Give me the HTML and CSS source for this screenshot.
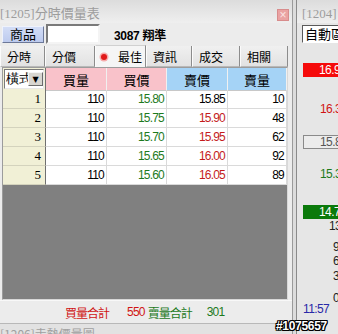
FILE: index.html
```html
<!DOCTYPE html>
<html lang="zh-Hant">

<head>
    <meta charset="UTF-8">
    <title>分時價量表</title>
    <link rel="stylesheet" href="styles.css">
</head>

<body>
    <div class="screen">
        <!-- 1205 window -->
        <div class="main">
            <div class="titlebar">
                <span class="title">[1205]分時價量表</span>
                <span class="close">×</span>
            </div>

            <div class="toolbar">
                <button class="btn">商品</button>
                <div class="input"></div>
                <b class="stock">3087 翔準</b>
            </div>

            <div class="tabs">
                <div class="tab w45">分時</div>
                <div class="tab w50">分價</div>
                <div class="tab w51 active"><span class="dot"></span>最佳</div>
                <div class="tab w46">資訊</div>
                <div class="tab w48">成交</div>
                <div class="tab w48">相關</div>
            </div>

            <div class="grid">
                <div class="row head">
                    <div class="cell idx">
                        <div class="select"><span class="select-text">橫式</span><span class="arrow">▼</span></div>
                    </div>
                    <div class="cell buy">買量</div>
                    <div class="cell buy">買價</div>
                    <div class="cell sell">賣價</div>
                    <div class="cell sell">賣量</div>
                </div>
                <div class="row">
                    <div class="cell idx">1</div>
                    <div class="cell">110</div>
                    <div class="cell up">15.80</div>
                    <div class="cell">15.85</div>
                    <div class="cell">10</div>
                </div>
                <div class="row">
                    <div class="cell idx">2</div>
                    <div class="cell">110</div>
                    <div class="cell up">15.75</div>
                    <div class="cell down">15.90</div>
                    <div class="cell">48</div>
                </div>
                <div class="row">
                    <div class="cell idx">3</div>
                    <div class="cell">110</div>
                    <div class="cell up">15.70</div>
                    <div class="cell down">15.95</div>
                    <div class="cell">62</div>
                </div>
                <div class="row">
                    <div class="cell idx">4</div>
                    <div class="cell">110</div>
                    <div class="cell up">15.65</div>
                    <div class="cell down">16.00</div>
                    <div class="cell">92</div>
                </div>
                <div class="row">
                    <div class="cell idx">5</div>
                    <div class="cell">110</div>
                    <div class="cell up">15.60</div>
                    <div class="cell down">16.05</div>
                    <div class="cell">89</div>
                </div>
            </div>

            <div class="sumbar">
                <span class="red">買量合計</span>
                <span class="red num">550</span>
                <span class="green">賣量合計</span>
                <span class="green num">301</span>
            </div>

            <div class="nexttitle">[1206]走勢價量圖</div>
        </div>

        <div class="splitter"></div>

        <!-- 1204 window (cut off) -->
        <div class="side">
            <div class="titlebar">
                <span class="title">[1204]</span>
            </div>
            <div class="side-bar">
                <div class="combo">自動區間</div>
            </div>
            <div class="chart">
                <div class="mark mark-red" style="top: 18px">16.90</div>
                <div class="label red" style="top: 57px">16.30</div>
                <div class="mark mark-ref" style="top: 90px">15.80</div>
                <div class="label green" style="top: 122px">15.30</div>
                <div class="mark mark-green" style="top: 160px">14.70</div>
                <div class="label vol" style="top: 174px; left: 32px">1308</div>
                <div class="label vol" style="top: 195px">981</div>
                <div class="label vol" style="top: 209px">654</div>
                <div class="label vol" style="top: 224px">327</div>
                <div class="label vol" style="top: 246px">0</div>
                <div class="label time" style="top: 257px">11:57</div>
            </div>
        </div>

        <div class="watermark">#1075657</div>
    </div>
</body>

</html>
```

FILE: styles.css
```css
* {
    box-sizing: border-box;
}

body {
    margin: 0;
    width: 338px;
    height: 334px;
    overflow: hidden;
    background-color: #e8e8e8;
    font-family: "Liberation Sans", "Noto Sans CJK TC", sans-serif;
    font-size: 13px;
    color: #000;
}

.screen {
    position: relative;
    display: flex;
    height: 334px;
}

/* Left window */
.main {
    flex: none;
    width: 292px;
    display: flex;
    flex-direction: column;
    background-color: #ececec;
}

.titlebar {
    flex: none;
    height: 23px;
    display: flex;
    align-items: flex-end;
    padding-bottom: 2px;
    background: linear-gradient(#dcdcdc, #efefef);
}

.title {
    color: #9d9d9d;
    font-family: "Liberation Serif", "Noto Sans CJK TC", serif;
    font-size: 13px;
    line-height: 15px;
    white-space: nowrap;
}

.close {
    margin-left: auto;
    margin-right: 3px;
    width: 12px;
    height: 12px;
    display: flex;
    align-items: center;
    justify-content: center;
    background-color: #eaa2a2;
    border: 1px solid #d88c8c;
    color: #fbe3e3;
    font-size: 12px;
    line-height: 10px;
}

/* Toolbar */
.toolbar {
    flex: none;
    height: 22px;
    display: flex;
    align-items: center;
    padding-left: 2px;
}

.btn {
    width: 42px;
    height: 17px;
    padding: 0;
    border: 1px solid;
    border-color: #eef2fc #6c7898 #6c7898 #eef2fc;
    background: linear-gradient(#d3ddf6, #bccaee);
    font-family: "Noto Sans CJK TC", sans-serif;
    font-size: 13px;
    line-height: 14px;
}

.input {
    margin-left: 2px;
    width: 54px;
    height: 20px;
    background-color: #fff;
    border: 2px solid;
    border-color: #7a7a7a #f4f4f4 #f4f4f4 #7a7a7a;
}

.stock {
    margin-left: 14px;
    font-size: 12px;
    letter-spacing: -0.3px;
}

/* Tabs */
.tabs {
    flex: none;
    height: 22px;
    display: flex;
    align-items: flex-end;
}

.tab {
    height: 21px;
    display: flex;
    align-items: center;
    padding-left: 6px;
    border-left: 1px solid #fbfbfb;
    border-right: 1px solid #8c8c8c;
    border-bottom: 1px solid #b8b8b8;
    background: linear-gradient(#f0f0f0, #e2e2e2);
    font-family: "Noto Sans CJK TC", sans-serif;
    font-size: 12px;
}

.tab.active {
    height: 22px;
    border-top: 1px solid #d0d0d0;
    border-bottom: none;
    background: #f5f5f5;
    padding-left: 4px;
}

.w45 { width: 45px; }
.w46 { width: 46px; }
.w48 { width: 48px; }
.w50 { width: 50px; }
.w51 { width: 51px; }

.dot {
    width: 6px;
    height: 6px;
    margin: 0 11px 0 1px;
    border-radius: 50%;
    background-color: #e01818;
    box-shadow: 0 0 0 1.5px #f6aaaa;
}

/* Quote grid */
.grid {
    flex: none;
    height: 233px;
    margin: 0 4px 0 2px;
    background-color: #808080;
    border: 1px solid;
    border-color: #9c9c9c #d8d8d8 #d8d8d8 #9c9c9c;
}

.row {
    display: grid;
    grid-template-columns: 43px 61px 60px 61px 59px;
    height: 19px;
    background-color: #fff;
}

.row.head {
    height: 22px;
}

.cell {
    display: flex;
    align-items: center;
    justify-content: flex-end;
    padding-right: 2px;
    border-right: 1px solid #dadada;
    border-bottom: 1px solid #dadada;
    font-size: 12px;
    letter-spacing: -0.8px;
    white-space: nowrap;
}

.head .cell {
    justify-content: center;
    padding-right: 0;
    border-right-color: #f0f0f0;
    border-bottom-color: #c8c8c8;
    font-family: "Noto Sans CJK TC", sans-serif;
    font-size: 13px;
    letter-spacing: 0;
}

.cell.idx {
    padding-right: 4px;
    background-color: #f1f0d6;
    border-right: 1px solid #707070;
    border-bottom-color: #d4d3bd;
    font-family: "Liberation Serif", serif;
    font-size: 13px;
    letter-spacing: 0;
}

.head .cell.idx {
    padding: 1px;
    background-color: #f1f0d6;
    border-right: 1px solid #707070;
}

.head .buy {
    background-color: #f9c2ca;
}

.head .sell {
    background-color: #a5d3f6;
}

.select {
    width: 100%;
    height: 100%;
    display: flex;
    align-items: center;
    background-color: #fff;
    border: 1px solid;
    border-color: #7a7a7a #e8e8e8 #e8e8e8 #7a7a7a;
    overflow: hidden;
}

.select-text {
    width: 23px;
    padding-left: 1px;
    overflow: hidden;
    font-size: 13px;
    white-space: nowrap;
}

.arrow {
    width: 15px;
    height: 14px;
    display: flex;
    align-items: center;
    justify-content: center;
    background-color: #d8d6d0;
    border: 1px solid;
    border-color: #f4f4f4 #6c6c6c #6c6c6c #f4f4f4;
    font-family: "DejaVu Sans", sans-serif;
    font-size: 8px;
}

.up {
    color: #1d7a1d;
}

.down {
    color: #c41c1c;
}

/* Totals */
.sumbar {
    flex: none;
    height: 23px;
    display: flex;
    align-items: center;
    padding-left: 65px;
    border-top: 1px solid #f8f8f8;
    font-family: "Noto Sans CJK TC", sans-serif;
    font-size: 12px;
    letter-spacing: -1px;
}

.sumbar .num {
    font-family: "Liberation Sans", sans-serif;
    font-size: 12px;
    letter-spacing: -0.8px;
    margin: 0 3px 0 18px;
}

.sumbar .num:last-child {
    margin-left: 15px;
}

.red {
    color: #d01414;
}

.green {
    color: #1c7a1c;
}

.nexttitle {
    flex: none;
    height: 11px;
    overflow: hidden;
    padding: 3px 0 0 0;
    border-top: 1px solid #b8b8b8;
    background-color: #e2e2e2;
    color: #a0a0a0;
    font-family: "Noto Sans CJK TC", sans-serif;
    font-size: 12px;
    line-height: 14px;
    white-space: nowrap;
}

/* Splitter between windows */
.splitter {
    flex: none;
    width: 5px;
    background-color: #dcdcdc;
    border-left: 1px solid #9a9a9a;
    border-right: 1px solid #8a8a8a;
}

/* Right window */
.side {
    flex: none;
    width: 41px;
    display: flex;
    flex-direction: column;
    overflow: hidden;
    background-color: #e6e6e6;
}

.side .titlebar {
    padding-left: 5px;
}

.side-bar {
    flex: none;
    height: 22px;
    padding: 2px 0 0 5px;
}

.combo {
    width: 70px;
    height: 18px;
    background-color: #fff;
    border: 1px solid;
    border-color: #5a5a5a #fff #fff #5a5a5a;
    font-family: "Noto Sans CJK TC", sans-serif;
    font-size: 13px;
    line-height: 16px;
    padding-left: 2px;
    white-space: nowrap;
}

/* Price axis of the chart */
.chart {
    position: relative;
    flex: 1;
}

.mark {
    position: absolute;
    left: 6px;
    width: 50px;
    height: 14px;
    padding-left: 16px;
    font-size: 12px;
    line-height: 14px;
    letter-spacing: -0.6px;
    white-space: nowrap;
}

.mark-red {
    background-color: #f50a0a;
    color: #fff;
}

.mark-ref {
    background-color: #ececec;
    border: 1px solid #8a8a8a;
    color: #555;
    line-height: 12px;
}

.mark-green {
    background-color: #0b7a0b;
    color: #fff;
}

.label {
    position: absolute;
    left: 23px;
    font-size: 12px;
    line-height: 14px;
    letter-spacing: -0.6px;
    white-space: nowrap;
}

.label.vol {
    left: 36px;
    color: #222;
}

.label.time {
    left: 6px;
    color: #2828a8;
}

/* Watermark */
.watermark {
    position: absolute;
    right: 11px;
    bottom: 2px;
    color: #fff;
    font-weight: bold;
    font-size: 12px;
    line-height: 12px;
    letter-spacing: -0.3px;
    text-shadow: 1px 0 0 #000, -1px 0 0 #000, 0 1px 0 #000, 0 -1px 0 #000,
        1px 1px 0 #000, -1px -1px 0 #000, 1px -1px 0 #000, -1px 1px 0 #000;
}
```
